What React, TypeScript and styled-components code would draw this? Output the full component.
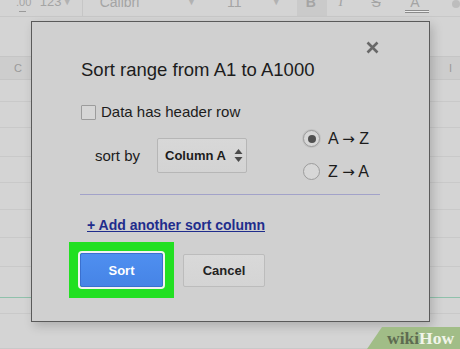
import React from "react";
import styled, { createGlobalStyle } from "styled-components";

const GlobalStyle = createGlobalStyle`
  html, body { margin: 0; padding: 0; }
  body { background: #d4d4d4; font-family: "Liberation Sans", Arial, sans-serif; }
`;

const Page = styled.div`
  position: relative;
  width: 460px;
  height: 349px;
  overflow: hidden;
  background: #d4d4d4;
`;

const Toolbar = styled.div`
  display: flex;
  height: 16px;
  padding-left: 16px;
  border-bottom: 1px solid #c8c8c8;
  overflow: hidden;
  color: #a4a4a4;
  font-size: 14px;
`;

const ToolCell = styled.div<{ $w: number; $pl?: number; $pr?: number; $bg?: string; $fs?: number }>`
  display: flex;
  flex-direction: column;
  box-sizing: border-box;
  width: ${(p) => p.$w}px;
  padding-left: ${(p) => p.$pl ?? 0}px;
  padding-right: ${(p) => p.$pr ?? 0}px;
  background: ${(p) => p.$bg ?? "transparent"};
  font-size: ${(p) => p.$fs ?? 14}px;
`;

const ToolLine = styled.div`
  display: flex;
  margin-top: -5px;
  line-height: 14px;
  height: 14px;
  white-space: nowrap;
`;

const ToolText = styled.span<{ $bold?: boolean; $italic?: boolean }>`
  font-weight: ${(p) => (p.$bold ? 700 : 400)};
  font-style: ${(p) => (p.$italic ? "italic" : "normal")};
  font-family: ${(p) => (p.$italic ? '"Liberation Serif", serif' : "inherit")};
`;

const Caret = styled.span`
  margin-left: auto;
  font-size: 9px;
  color: #b2b2b2;
`;

const Separator = styled.div`
  width: 1px;
  background: #c6c6c6;
`;

const DecimalMark = styled.div`
  width: 7px;
  height: 0;
  margin: 2px 0 0 3px;
  border-top: 1px solid #9a9a9a;
`;

const ColorBar = styled.div`
  width: 24px;
  height: 1px;
  margin: 1px 0 0 -5px;
  border-top: 1.5px solid #8a8a8a;
  border-bottom: 1.5px solid #8a8a8a;
  background: #ececec;
`;

const Strike = styled.span`
  text-decoration: line-through;
`;

const MoreDot = styled.div`
  width: 8px;
  height: 8px;
  margin: 0 0 0 14px;
  border-radius: 50%;
  background: #bdbdbd;
`;

const FormulaGap = styled.div`
  height: 39px;
`;

const HeaderRow = styled.div`
  display: flex;
  justify-content: space-between;
  align-items: center;
  box-sizing: border-box;
  height: 24px;
  padding: 0 8px 0 14px;
  background: #cdcdcd;
  border-top: 1px solid #c5c5c5;
  border-bottom: 1px solid #c5c5c5;
  color: #9a9a9a;
  font-size: 11px;
`;

const GridRow = styled.div<{ $h: number; $line?: string }>`
  box-sizing: border-box;
  height: ${(p) => p.$h}px;
  border-bottom: 1px solid ${(p) => p.$line ?? "#c9c9c9"};
`;

const Dialog = styled.div`
  position: absolute;
  left: 31px;
  top: 21px;
  width: 399px;
  height: 301px;
  box-sizing: border-box;
  display: flex;
  flex-direction: column;
  padding: 19px 49px 0 49px;
  background: #d0d0d0;
  border: 1px solid #5a5a5a;
  box-shadow: 3px 4px 10px rgba(0, 0, 0, 0.18);
  color: #1c1c1c;
`;

const CloseRow = styled.div`
  display: flex;
  justify-content: flex-end;
  height: 13px;
`;

const CloseIcon = styled.svg`
  width: 13px;
  height: 13px;
  margin-right: 1px;
`;

const Title = styled.div`
  margin-top: 5px;
  font-size: 18.5px;
  line-height: 22px;
`;

const CheckRow = styled.label`
  display: flex;
  align-items: center;
  gap: 5px;
  margin-top: 22px;
  height: 18px;
  font-size: 15px;
  line-height: 18px;
`;

const Checkbox = styled.span`
  width: 15px;
  height: 15px;
  box-sizing: border-box;
  border: 1px solid #9c9c9c;
  border-radius: 1px;
  background: #d6d6d6;
`;

const SortRow = styled.div`
  display: flex;
  align-items: center;
  margin-top: 9px;
  height: 50px;
`;

const SortLabel = styled.span`
  margin: 0 18px 0 14px;
  font-size: 15px;
  width: 44px;
  white-space: nowrap;
`;

const Select = styled.div`
  display: flex;
  align-items: center;
  justify-content: space-between;
  box-sizing: border-box;
  width: 90px;
  height: 35px;
  padding: 0 3px 0 7px;
  border: 1px solid #b6b6b6;
  border-radius: 2px;
  background: linear-gradient(#d8d8d8, #d3d3d3);
  font-size: 13px;
  font-weight: 700;
`;

const RadioGroup = styled.div`
  display: flex;
  flex-direction: column;
  gap: 16px;
  margin-left: 56px;
`;

const RadioItem = styled.label`
  display: flex;
  align-items: center;
  gap: 8px;
  height: 17px;
  font-size: 16px;
  white-space: nowrap;
`;

const Arrow = styled.span`
  font-family: "DejaVu Sans", sans-serif;
  font-size: 15px;
`;

const RadioCircle = styled.span<{ $checked?: boolean }>`
  display: flex;
  align-items: center;
  justify-content: center;
  width: 17px;
  height: 17px;
  box-sizing: border-box;
  border-radius: 50%;
  border: 1px solid #9c9c9c;
  background: #d7d7d7;
  box-shadow: ${(p) => (p.$checked ? "0 0 0 1px #c2c2c2" : "none")};
  &::after {
    content: "";
    display: ${(p) => (p.$checked ? "block" : "none")};
    width: 8px;
    height: 8px;
    border-radius: 50%;
    background: #505050;
  }
`;

const Divider = styled.div`
  margin: 14px 0 0 -1px;
  border-top: 1px solid #a2a2c9;
`;

const AddLink = styled.a`
  align-self: flex-start;
  margin: 22px 0 0 6px;
  font-size: 14px;
  font-weight: 700;
  line-height: 17px;
  color: #1f2d8c;
  text-decoration: underline;
  cursor: pointer;
`;

const ButtonRow = styled.div`
  display: flex;
  align-items: center;
  gap: 9px;
  margin: 8px 0 0 -12px;
`;

const Highlight = styled.div`
  display: flex;
  padding: 11px;
  background: #22e022;
`;

const BaseButton = styled.button`
  box-sizing: border-box;
  border-radius: 2px;
  font-family: "Liberation Sans", Arial, sans-serif;
  font-size: 13px;
  font-weight: 700;
  padding: 0;
  cursor: pointer;
`;

const PrimaryButton = styled(BaseButton)`
  width: 83px;
  height: 34px;
  border: 1px solid #3b70cf;
  background: linear-gradient(#4f8ff0, #4684e6);
  color: #ffffff;
  box-shadow: 0 0 0 2px #f2f2f2;
`;

const SecondaryButton = styled(BaseButton)`
  width: 82px;
  height: 33px;
  border: 1px solid #bcbcbc;
  background: linear-gradient(#d9d9d9, #d4d4d4);
  color: #222222;
`;

const Badge = styled.div`
  position: absolute;
  right: 0;
  bottom: 0;
  width: 93px;
  height: 22px;
  box-sizing: border-box;
  padding-left: 20px;
  background: #a1bd87;
  clip-path: polygon(15px 0, 100% 0, 100% 100%, 0 100%);
  font-family: "Liberation Serif", "Times New Roman", serif;
  font-weight: 700;
  font-size: 17.5px;
  line-height: 22px;
  white-space: nowrap;
`;

const BadgeDark = styled.span`
  color: #5e6b51;
`;

const BadgeLight = styled.span`
  color: #f1f5ea;
`;

const rowHeights = [22, 26, 29, 26, 27, 28, 29, 31, 16, 35];

export default function App() {
  return (
    <>
      <GlobalStyle />
      <Page>
        <Toolbar>
          <ToolCell $w={24} $fs={11}>
            <ToolLine>
              <ToolText>.00</ToolText>
            </ToolLine>
            <DecimalMark />
          </ToolCell>
          <ToolCell $w={42} $pr={10} $fs={13}>
            <ToolLine>
              <ToolText>123</ToolText>
              <Caret>▼</Caret>
            </ToolLine>
          </ToolCell>
          <Separator />
          <ToolCell $w={145} $pl={17} $pr={31}>
            <ToolLine>
              <ToolText>Calibri</ToolText>
              <Caret>▼</Caret>
            </ToolLine>
          </ToolCell>
          <ToolCell $w={70} $pr={16}>
            <ToolLine>
              <ToolText>11</ToolText>
              <Caret>▼</Caret>
            </ToolLine>
          </ToolCell>
          <ToolCell $w={30} $pl={9} $bg="#cacaca">
            <ToolLine>
              <ToolText $bold>B</ToolText>
            </ToolLine>
          </ToolCell>
          <ToolCell $w={34} $pl={12}>
            <ToolLine>
              <ToolText $italic>I</ToolText>
            </ToolLine>
          </ToolCell>
          <ToolCell $w={38} $pl={11}>
            <ToolLine>
              <Strike>S</Strike>
            </ToolLine>
          </ToolCell>
          <ToolCell $w={40} $pl={12}>
            <ToolLine>
              <ToolText>A</ToolText>
            </ToolLine>
            <ColorBar />
          </ToolCell>
          <MoreDot />
        </Toolbar>
        <FormulaGap />
        <HeaderRow>
          <span>C</span>
          <span>I</span>
        </HeaderRow>
        {rowHeights.map((h, i) => (
          <GridRow key={i} $h={h} $line={i === 7 ? "#8fc1ab" : undefined} />
        ))}

        <Dialog>
          <CloseRow>
            <CloseIcon viewBox="0 0 13 13">
              <path d="M1.5 1.5 L11.5 11.5 M11.5 1.5 L1.5 11.5" stroke="#686868" strokeWidth="2.6" />
            </CloseIcon>
          </CloseRow>
          <Title>Sort range from A1 to A1000</Title>
          <CheckRow>
            <Checkbox />
            <span>Data has header row</span>
          </CheckRow>
          <SortRow>
            <SortLabel>sort by</SortLabel>
            <Select>
              <span>Column A</span>
              <svg width="9" height="15" viewBox="0 0 9 15">
                <path d="M4.5 1 L8.5 6 L0.5 6 Z" fill="#4a4a4a" />
                <path d="M4.5 14 L8.5 9 L0.5 9 Z" fill="#4a4a4a" />
              </svg>
            </Select>
            <RadioGroup>
              <RadioItem>
                <RadioCircle $checked />
                <span>
                  A <Arrow>→</Arrow> Z
                </span>
              </RadioItem>
              <RadioItem>
                <RadioCircle />
                <span>
                  Z <Arrow>→</Arrow> A
                </span>
              </RadioItem>
            </RadioGroup>
          </SortRow>
          <Divider />
          <AddLink>+ Add another sort column</AddLink>
          <ButtonRow>
            <Highlight>
              <PrimaryButton>Sort</PrimaryButton>
            </Highlight>
            <SecondaryButton>Cancel</SecondaryButton>
          </ButtonRow>
        </Dialog>

        <Badge>
          <BadgeDark>wiki</BadgeDark>
          <BadgeLight>How</BadgeLight>
        </Badge>
      </Page>
    </>
  );
}
